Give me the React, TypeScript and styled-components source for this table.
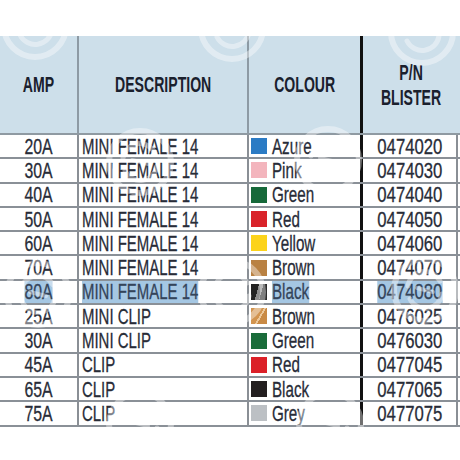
import { createGlobalStyle, styled } from 'styled-components';

interface FuseRow {
  amp: string,
  desc: string,
  colour: string,
  swatch: string,
  pn: string,
  picked?: boolean
}

const rows: FuseRow[] = [
  { amp: '20A', desc: 'MINI FEMALE 14', colour: 'Azure', swatch: '#2b7bc4', pn: '0474020' },
  { amp: '30A', desc: 'MINI FEMALE 14', colour: 'Pink', swatch: '#f3b5bd', pn: '0474030' },
  { amp: '40A', desc: 'MINI FEMALE 14', colour: 'Green', swatch: '#17693a', pn: '0474040' },
  { amp: '50A', desc: 'MINI FEMALE 14', colour: 'Red', swatch: '#d9232a', pn: '0474050' },
  { amp: '60A', desc: 'MINI FEMALE 14', colour: 'Yellow', swatch: '#fcd31b', pn: '0474060' },
  { amp: '70A', desc: 'MINI FEMALE 14', colour: 'Brown', swatch: '#b98142', pn: '0474070' },
  {
    amp: '80A', desc: 'MINI FEMALE 14', colour: 'Black', pn: '0474080', picked: true,
    swatch: 'linear-gradient(105deg, #222 0 40%, #8d8d8d 40% 62%, #2c2c2c 62% 100%)'
  },
  {
    amp: '25A', desc: 'MINI CLIP', colour: 'Brown', pn: '0476025',
    swatch: 'linear-gradient(120deg, #d2944f 0 52%, #ecc89a 52% 60%, #c98a45 60% 100%)'
  },
  { amp: '30A', desc: 'MINI CLIP', colour: 'Green', swatch: '#1a6c3a', pn: '0476030' },
  { amp: '45A', desc: 'CLIP', colour: 'Red', swatch: '#db2028', pn: '0477045' },
  { amp: '65A', desc: 'CLIP', colour: 'Black', swatch: '#231f20', pn: '0477065' },
  { amp: '75A', desc: 'CLIP', colour: 'Grey', swatch: '#bcc0c4', pn: '0477075' },
];

// faded logo stamps printed across the sheet
const stamps = [
  [35, 26], [232, 28], [422, 32],
  [140, 162], [328, 160],
  [38, 294], [232, 292], [425, 290],
  [140, 424], [330, 424],
];

const GlobalStyle = createGlobalStyle`
  body {
    margin: 0;
    background: #fff;
  }
`;

const Page = styled.div`
  position: relative;
  width: 460px;
  height: 460px;
  padding-top: 36px;
  box-sizing: border-box;
  overflow: hidden;
  font-family: "Liberation Sans", Arial, sans-serif;
`;

const HeadRow = styled.div`
  display: grid;
  grid-template-columns: 79px 170px 111px 1fr;
  height: 97px;
  background: #cddfea;
  border-bottom: 2px solid #8f9aa2;
`;

const HeadCell = styled.div<{ $edge?: 'grey' | 'black' }>`
  display: flex;
  align-items: center;
  justify-content: center;
  text-align: center;
  border-right: ${({ $edge }) => $edge === 'grey' ? '2px solid #8d9aa4' : 'none'};
  border-left: ${({ $edge }) => $edge === 'black' ? '3px solid #111' : 'none'};
`;

const HeadLabel = styled.span`
  display: inline-block;
  font-size: 22px;
  font-weight: 700;
  line-height: 25px;
  color: #1a202d;
  transform: scaleX(0.64);
`;

const BodyRow = styled.div`
  display: grid;
  grid-template-columns: 79px 170px 111px 98px;
  height: 24.3px;
  box-sizing: border-box;
  border-bottom: 2px solid #8a9097;

  &:last-child {
    height: 22.7px;
    border-bottom: none;
  }
`;

const Cell = styled.div<{ $align: 'center' | 'left', $edge?: 'grey' | 'pn' }>`
  display: flex;
  align-items: center;
  gap: 5px;
  justify-content: ${({ $align }) => $align === 'center' ? 'center' : 'flex-start'};
  padding-left: ${({ $align }) => $align === 'left' ? '2px' : '0'};
  border-right: ${({ $edge }) => $edge ? '2px solid #8a8f95' : 'none'};
  border-left: ${({ $edge }) => $edge === 'pn' ? '3px solid #111' : 'none'};
  overflow: hidden;
`;

const Text = styled.span<{ $squeeze: number, $origin: 'left' | 'center', $picked?: boolean }>`
  display: inline-block;
  flex: none;
  font-size: 22px;
  line-height: 23px;
  white-space: nowrap;
  -webkit-text-stroke: 0.3px currentColor;
  color: ${({ $picked }) => $picked ? '#34445a' : '#282c38'};
  background: ${({ $picked }) => $picked ? '#a5c7e3' : 'transparent'};
  transform: scaleX(${({ $squeeze }) => $squeeze});
  transform-origin: ${({ $origin }) => $origin} center;
`;

const DescText = styled(Text)`
  margin-left: 1px;
`;

const Swatch = styled.span<{ $fill: string }>`
  width: 16px;
  height: 16px;
  flex: none;
  background: ${({ $fill }) => $fill};
`;

const ColourText = styled(Text)`
  margin-right: -40px;
`;

const StampLayer = styled.svg`
  position: absolute;
  top: 0;
  left: 0;
  pointer-events: none;
`;

function Stamp({ x, y }: { x: number, y: number }) {
  return (
    <g transform={`translate(${x} ${y})`} fill="none" stroke="#fff" strokeLinecap="round">
      <circle r="31" strokeWidth="6" />
      <path d="M -17 -4 A 17 17 0 0 1 15 -9" strokeWidth="5" />
      <path d="M 17 4 A 17 17 0 0 1 -15 9" strokeWidth="5" />
      <path d="M -8 -2 L 8 2" strokeWidth="4" />
    </g>
  );
}

function App() {
  return (
    <Page>
      <GlobalStyle />
      <HeadRow>
        <HeadCell $edge="grey"><HeadLabel>AMP</HeadLabel></HeadCell>
        <HeadCell $edge="grey"><HeadLabel>DESCRIPTION</HeadLabel></HeadCell>
        <HeadCell><HeadLabel>COLOUR</HeadLabel></HeadCell>
        <HeadCell $edge="black"><HeadLabel>P/N<br />BLISTER</HeadLabel></HeadCell>
      </HeadRow>
      {rows.map((row, i) => (
        <BodyRow key={i}>
          <Cell $align="center" $edge="grey">
            <Text $squeeze={0.72} $origin="center" $picked={row.picked}>{row.amp}</Text>
          </Cell>
          <Cell $align="left" $edge="grey">
            <DescText $squeeze={0.68} $origin="left" $picked={row.picked}>{row.desc}</DescText>
          </Cell>
          <Cell $align="left">
            <Swatch $fill={row.swatch} />
            <ColourText $squeeze={0.69} $origin="left" $picked={row.picked}>{row.colour}</ColourText>
          </Cell>
          <Cell $align="center" $edge="pn">
            <Text $squeeze={0.76} $origin="center" $picked={row.picked}>{row.pn}</Text>
          </Cell>
        </BodyRow>
      ))}
      <StampLayer width="460" height="460" viewBox="0 0 460 460" opacity="0.4">
        {stamps.map(([x, y], i) => <Stamp key={i} x={x} y={y} />)}
      </StampLayer>
    </Page>
  );
}

export default App;
